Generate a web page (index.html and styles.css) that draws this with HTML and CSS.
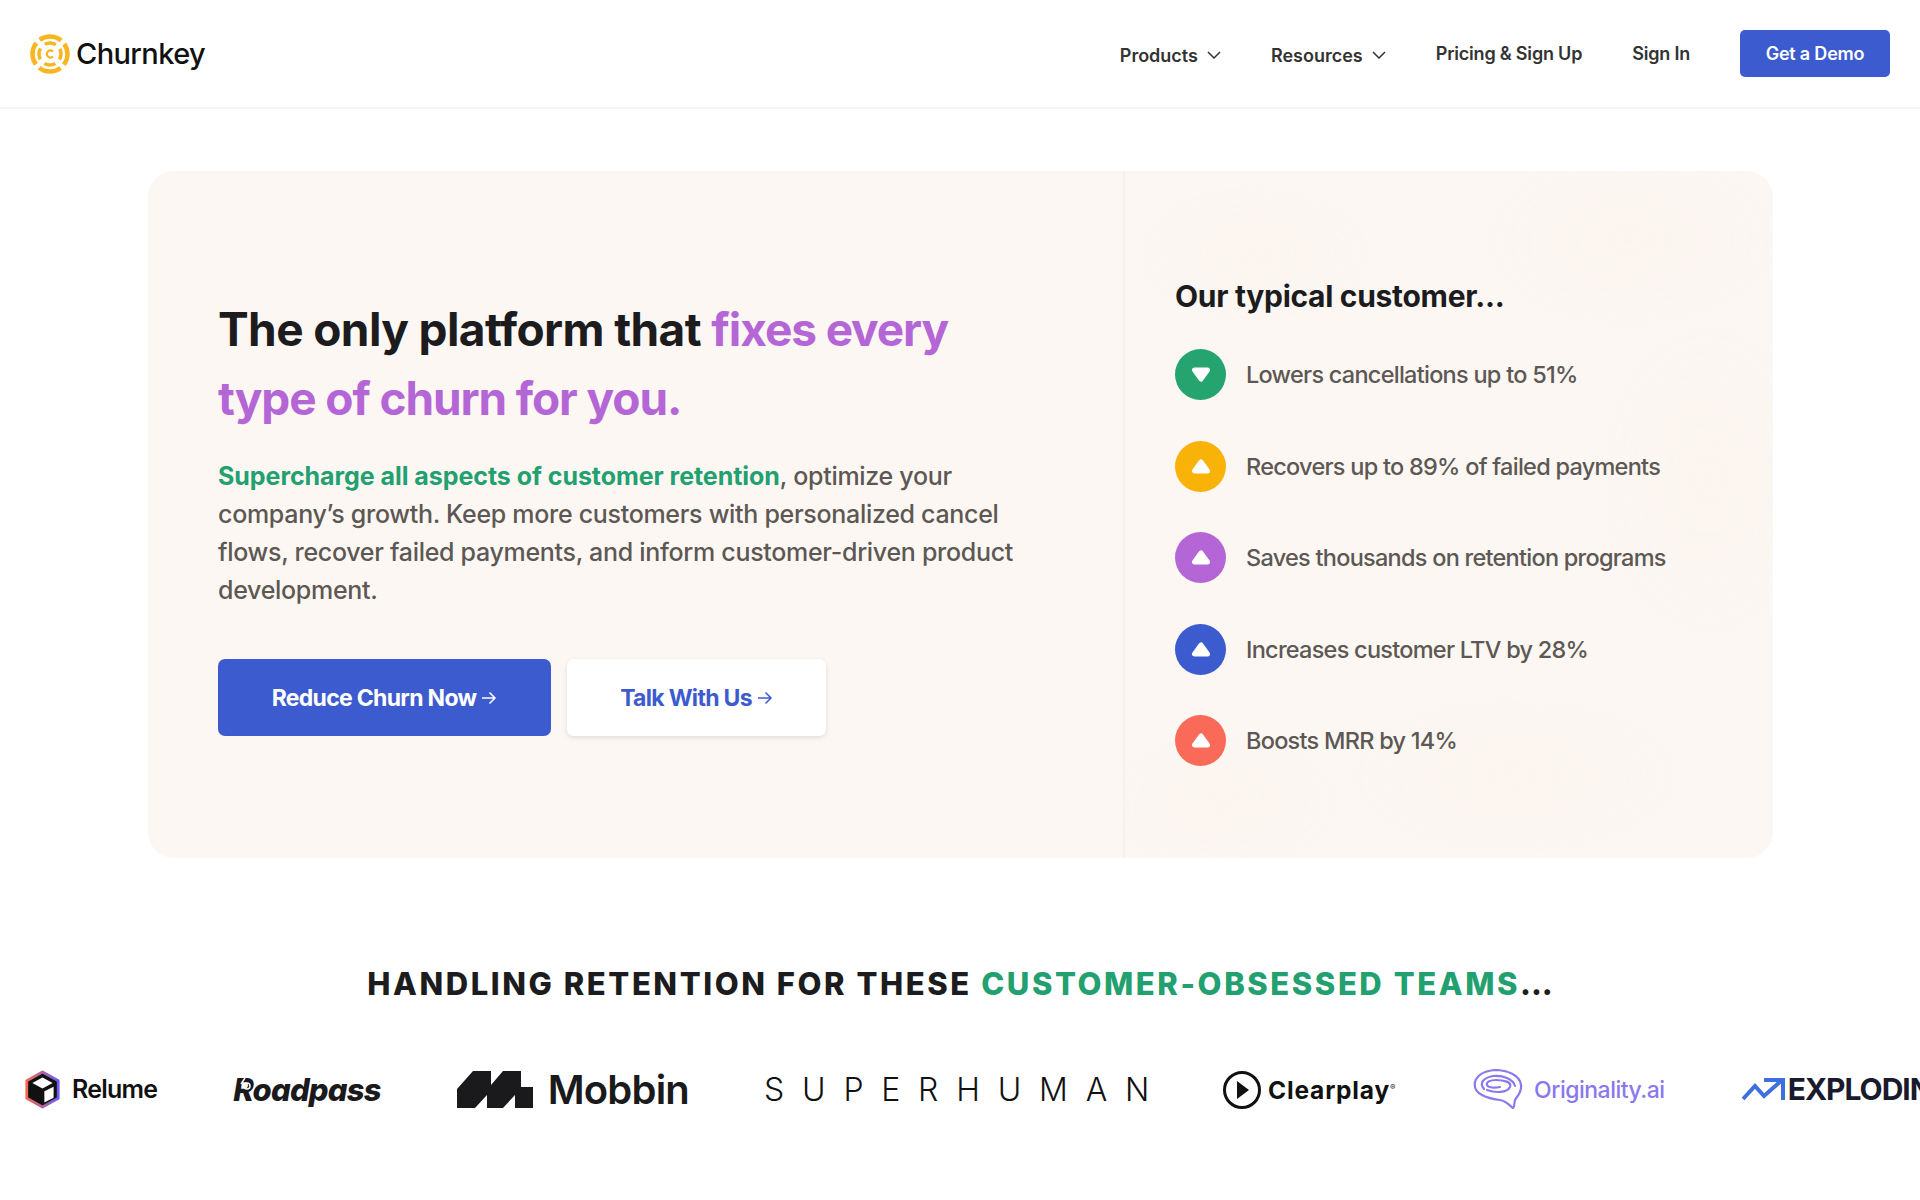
FILE: index.html
```html
<!DOCTYPE html>
<html lang="en">
<head>
<meta charset="UTF-8" />
<meta name="viewport" content="width=device-width, initial-scale=1" />
<title>Churnkey</title>
<link rel="stylesheet" href="styles.css">
</head>
<body>
  <header class="topbar">
    <a class="brand" href="#">
      <svg class="brand-mark" viewBox="0 0 40 40" width="40" height="40" fill="none" stroke="#f7b51f">
        <circle cx="20" cy="20" r="17.5" stroke-width="4.500" stroke-dasharray="23 4.490" stroke-dashoffset="11.500"/>
        <circle cx="20" cy="20" r="11" stroke-width="3.500" stroke-dasharray="11.500 5.780" stroke-dashoffset="5.750"/>
        <path stroke-width="2.200" d="M23 17.500a3.600 3.600 0 1 0 0 5"/>
        <path stroke-width="2" d="M9.500 9.500l4 4M30.500 9.500l-4 4M9.500 30.500l4-4M30.500 30.500l-4-4" stroke="#fff"/>
      </svg>
      <span>Churnkey</span>
    </a>
    <nav class="nav">
      <a class="nav-link nav-drop" href="#">Products
        <svg width="14" height="8" viewBox="0 0 14 8" fill="none" stroke="#333" stroke-width="1.500"><path d="M1 1l6 6 6-6"/></svg>
      </a>
      <a class="nav-link nav-drop" href="#">Resources
        <svg width="14" height="8" viewBox="0 0 14 8" fill="none" stroke="#333" stroke-width="1.500"><path d="M1 1l6 6 6-6"/></svg>
      </a>
      <a class="nav-link" href="#">Pricing &amp; Sign Up</a>
      <a class="nav-link" href="#">Sign In</a>
      <a class="demo-btn" href="#">Get a Demo</a>
    </nav>
  </header>

  <main>
    <section class="hero">
      <div class="hero-left">
        <h1>The only platform that <span class="purple">fixes every type of churn for you.</span></h1>
        <p class="lead"><strong>Supercharge all aspects of customer retention</strong>, optimize your company’s growth. Keep more customers with personalized cancel flows, recover failed payments, and inform customer-driven product development.</p>
        <div class="actions">
          <a class="btn btn-primary" href="#">Reduce Churn Now
            <svg width="16" height="14" viewBox="0 0 16 14" fill="none" stroke="currentColor" stroke-width="1.500"><path d="M1 7h13M8.500 1.500L14 7l-5.500 5.500"/></svg>
          </a>
          <a class="btn btn-light" href="#">Talk With Us
            <svg width="16" height="14" viewBox="0 0 16 14" fill="none" stroke="currentColor" stroke-width="1.500"><path d="M1 7h13M8.500 1.500L14 7l-5.500 5.500"/></svg>
          </a>
        </div>
      </div>
      <div class="hero-right">
        <h2>Our typical customer...</h2>
        <ul class="stats">
          <li><span class="dot green"><svg width="20" height="17" viewBox="0 0 20 17"><path d="M3.500 4h13L10 13z" fill="#fff" stroke="#fff" stroke-width="5" stroke-linejoin="round"/></svg></span>Lowers cancellations up to 51%</li>
          <li><span class="dot amber"><svg width="20" height="17" viewBox="0 0 20 17"><path d="M3.500 13h13L10 4z" fill="#fff" stroke="#fff" stroke-width="5" stroke-linejoin="round"/></svg></span>Recovers up to 89% of failed payments</li>
          <li><span class="dot violet"><svg width="20" height="17" viewBox="0 0 20 17"><path d="M3.500 13h13L10 4z" fill="#fff" stroke="#fff" stroke-width="5" stroke-linejoin="round"/></svg></span>Saves thousands on retention programs</li>
          <li><span class="dot blue"><svg width="20" height="17" viewBox="0 0 20 17"><path d="M3.500 13h13L10 4z" fill="#fff" stroke="#fff" stroke-width="5" stroke-linejoin="round"/></svg></span>Increases customer LTV by 28%</li>
          <li><span class="dot coral"><svg width="20" height="17" viewBox="0 0 20 17"><path d="M3.500 13h13L10 4z" fill="#fff" stroke="#fff" stroke-width="5" stroke-linejoin="round"/></svg></span>Boosts MRR by 14%</li>
        </ul>
      </div>
    </section>

    <section class="teams">
      <h3>HANDLING RETENTION FOR THESE <span class="green-text">CUSTOMER-OBSESSED TEAMS</span><span class="dots">...</span></h3>
      <div class="logos">
        <div class="logo logo-relume">
          <svg width="37" height="41" viewBox="0 0 40 42">
            <defs><linearGradient id="rel" x1="0" y1="0" x2="1" y2="0"><stop offset="0" stop-color="#f4694f"/><stop offset="1" stop-color="#6a5cf0"/></linearGradient></defs>
            <path d="M20 2l17 9.500v19L20 40 3 30.500v-19z" fill="#111" stroke="url(#rel)" stroke-width="3" stroke-linejoin="round"/>
            <path d="M20 8l11 6-11 6-11-6z" fill="#fff"/>
            <path d="M22 23l10-5v12l-10 5z" fill="#fff"/>
          </svg>
          <span>Relume</span>
        </div>
        <div class="logo logo-roadpass">
          <span>Roadpass</span>
          <svg class="road-loop" width="16" height="16" viewBox="0 0 16 16" fill="none" stroke="#fff" stroke-width="1.500"><circle cx="10" cy="9" r="3"/><path d="M8 1L4 7"/></svg>
        </div>
        <div class="logo logo-mobbin">
          <svg width="76" height="37" viewBox="0 0 76 37" fill="#1a1a1c"><path d="M0 18L16 0h18v14L46 0h18v16h12v21H58V24L46 37H30V24L18 37H0z"/></svg>
          <span>Mobbin</span>
        </div>
        <div class="logo logo-super"><span>SUPERHUMAN</span></div>
        <div class="logo logo-clearplay">
          <svg width="40" height="40" viewBox="0 0 40 40"><circle cx="20" cy="20" r="17.500" fill="none" stroke="#111" stroke-width="3"/><path d="M15 11l12 9-12 9z" fill="#111"/></svg>
          <span>Clearplay<sup>®</sup></span>
        </div>
        <div class="logo logo-orig">
          <svg width="50" height="40" viewBox="0 0 50 40" fill="none" stroke="#8b78ee" stroke-width="2.200" stroke-linecap="round" stroke-linejoin="round">
            <path d="M40 39C36 36 33 32 27 31 20 30 14 29 9 26 3 23 1 18 2 13 4 6 12 2 22 1 34 1 47 6 48 16 49 24 44 27 42 31 41 34 42 37 40 39z"/>
            <path d="M11 20C6 14 10 9 20 7 30 6 40 10 42 17"/>
            <path d="M14 21c8 3 20 3 23-3 2-5-6-7-14-7-6 0-10 2-9 5 1 3 8 3 13 2"/>
          </svg>
          <span>Originality.ai</span>
        </div>
        <div class="logo logo-exploding">
          <svg width="44" height="24" viewBox="0 0 44 24" fill="none" stroke="#3d6fe0" stroke-width="4"><path d="M1 22L13 9l9 10L39 4"/><path d="M22 3h19v20"/></svg>
          <span>EXPLODING TOPICS</span>
        </div>
      </div>
    </section>
  </main>
</body>
</html>
```

FILE: styles.css
```css
/* Reset and base */
* {
  box-sizing: border-box;
}
body {
  font-family: Inter, "Noto Sans", sans-serif;
  background: #fff;
  color: #1c1c1e;
  margin: 0;
  overflow-x: hidden;
}
a {
  color: inherit;
  text-decoration: none;
}

/* Header */
.topbar {
  height: 109px;
  padding: 0 30px;
  display: flex;
  align-items: center;
  justify-content: space-between;
  border-bottom: 2px solid #f5f4f2;
}
.brand {
  display: flex;
  align-items: center;
  gap: 6px;
  font-size: 29px;
  font-weight: 500;
  letter-spacing: -0.6px;
  color: #111;
}
.nav {
  display: flex;
  align-items: center;
  gap: 50px;
}
.nav-link {
  font-size: 18px;
  font-weight: 600;
  letter-spacing: -0.2px;
  color: #333;
}
.nav-drop {
  display: flex;
  align-items: center;
  gap: 9px;
  padding-top: 3px;
  letter-spacing: 0;
}
.demo-btn {
  width: 150px;
  height: 47px;
  display: flex;
  align-items: center;
  justify-content: center;
  background: #3c5bcf;
  color: #fff;
  border-radius: 5px;
  font-size: 18px;
  font-weight: 600;
  letter-spacing: -0.2px;
}

/* Hero card */
.hero {
  width: 1625px;
  height: 687px;
  margin: 62px 0 0 148px;
  display: flex;
  background: #fcf7f3;
  border-radius: 26px;
}
.hero-left {
  width: 977px;
  padding: 124px 0 0 70px;
  border-right: 2px solid #f7f1eb;
}
h1 {
  margin: 0;
  width: 800px;
  font-size: 46px;
  line-height: 69px;
  font-weight: 700;
  letter-spacing: -0.6px;
  color: #1c1c1e;
}
.purple {
  color: #b566d6;
  letter-spacing: -1.1px;
}
.lead {
  margin: 24px 0 0;
  width: 810px;
  font-size: 25px;
  line-height: 38px;
  font-weight: 500;
  letter-spacing: -0.3px;
  color: #5d5853;
}
.lead strong {
  color: #22a06f;
  font-weight: 700;
  letter-spacing: -0.05px;
}
.actions {
  margin-top: 50px;
  display: flex;
  gap: 16px;
}
.btn {
  height: 77px;
  display: flex;
  align-items: center;
  justify-content: center;
  gap: 5px;
  border-radius: 7px;
  font-size: 23px;
  font-weight: 700;
  letter-spacing: -0.7px;
}
.btn-primary {
  width: 333px;
  background: #3c5bcf;
  color: #fff;
}
.btn-light {
  width: 259px;
  background: #fff;
  color: #3c5bcf;
  box-shadow: 0 2px 5px rgb(0 0 0 / 0.1);
}
.hero-right {
  flex: 1;
  padding: 105px 0 0 50px;
  border-radius: 0 26px 26px 0;
  background:
    radial-gradient(ellipse 120px 70px at 20% 12%, #fbf5ee, transparent),
    radial-gradient(ellipse 150px 90px at 78% 10%, #fbf5ee, transparent),
    radial-gradient(ellipse 110px 160px at 90% 45%, #fbf5ee, transparent),
    radial-gradient(ellipse 170px 80px at 60% 88%, #fbf5ee, transparent),
    radial-gradient(ellipse 120px 70px at 15% 92%, #fbf5ee, transparent);
}
h2 {
  margin: 0;
  font-size: 30px;
  line-height: 40px;
  font-weight: 700;
  letter-spacing: -0.3px;
  color: #1c1c1e;
}
.stats {
  list-style: none;
  margin: 33px 0 0;
  padding: 0;
  display: flex;
  flex-direction: column;
  gap: 40.500px;
}
.stats li {
  display: flex;
  align-items: center;
  gap: 20px;
  font-size: 23.500px;
  font-weight: 500;
  letter-spacing: -0.74px;
  color: #5d5853;
}
.dot {
  width: 51px;
  height: 51px;
  flex: none;
  border-radius: 50%;
  display: flex;
  align-items: center;
  justify-content: center;
}
.green { background: #26a46f; }
.amber { background: #f9b208; }
.violet { background: #b566d6; }
.blue { background: #3c5bcf; }
.coral { background: #f96b58; }

/* Customer logos */
.teams {
  margin-top: 106px;
}
h3 {
  margin: 0;
  text-align: center;
  font-size: 31px;
  line-height: 40px;
  font-weight: 800;
  letter-spacing: 2.570px;
  color: #1c1c1e;
}
.green-text {
  color: #22a06f;
}
.dots {
  letter-spacing: 0;
}
.logos {
  margin-top: 60px;
  padding-left: 24px;
  display: flex;
  align-items: center;
  gap: 75px;
  overflow: hidden;
  white-space: nowrap;
  height: 50px;
}
.logo {
  flex: none;
  display: flex;
  align-items: center;
  color: #111;
}
.logo-relume {
  gap: 11px;
  font-size: 25px;
  font-weight: 600;
  letter-spacing: -0.8px;
}
.logo-roadpass {
  position: relative;
  margin-left: 1px;
  font-size: 31px;
  font-weight: 800;
  font-style: italic;
  letter-spacing: -0.8px;
  color: #1a1a1c;
}
.road-loop {
  position: absolute;
  left: 4px;
  top: 6px;
}
.logo-mobbin {
  margin-left: 1px;
  gap: 15px;
  font-size: 40px;
  font-weight: 600;
  letter-spacing: -0.8px;
  color: #1a1a1c;
}
.logo-super {
  font-size: 32px;
  font-weight: 300;
  letter-spacing: 17.800px;
  margin-right: -18px;
}
.logo-clearplay {
  margin-left: -2px;
  padding-top: 1px;
  gap: 6px;
  font-size: 24.500px;
  font-weight: 700;
  letter-spacing: 0.8px;
}
.logo-clearplay sup {
  font-size: 8px;
  font-weight: 400;
}
.logo-orig {
  margin-left: 2px;
  gap: 11px;
  font-size: 23px;
  font-weight: 500;
  letter-spacing: -0.5px;
  color: #8b78ee;
}
.logo-orig span {
  padding-top: 2px;
}
.logo-exploding {
  margin-left: 2px;
  gap: 2px;
  font-size: 30px;
  font-weight: 700;
  letter-spacing: -1px;
  color: #1a1a2e;
}
```
